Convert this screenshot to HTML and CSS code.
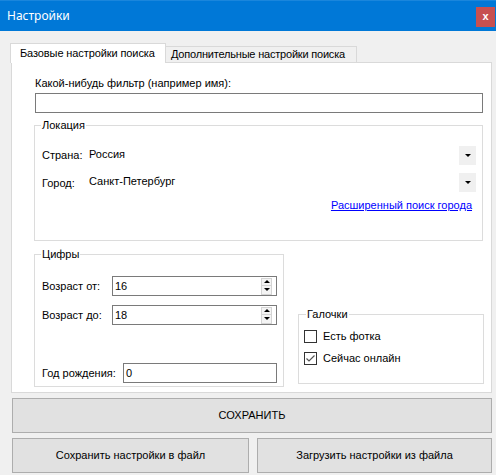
FILE: index.html
```html
<!DOCTYPE html>
<html lang="ru">
<head>
<meta charset="utf-8">
<title>Настройки</title>
<link rel="stylesheet" href="styles.css">
</head>
<body>
<div class="window">
  <div class="titlebar">
    <span class="title">Настройки</span>
    <span class="close">x</span>
  </div>
  <div class="client">
    <div class="tabs">
      <div class="tab active">Базовые настройки поиска</div>
      <div class="tab">Дополнительные настройки поиска</div>
      <div class="tab-fill"></div>
    </div>
    <div class="panel">
      <div class="label">Какой-нибудь фильтр (например имя):</div>
      <div class="textbox wide"></div>

      <fieldset class="group loc">
        <legend>Локация</legend>
        <div class="combo-row first">
          <span class="combo-label">Страна:</span>
          <div class="combo"><span class="combo-text">Россия</span><span class="combo-btn"><span class="tri"></span></span></div>
        </div>
        <div class="combo-row second">
          <span class="combo-label low">Город:</span>
          <div class="combo"><span class="combo-text">Санкт-Петербург</span><span class="combo-btn"><span class="tri"></span></span></div>
        </div>
        <div class="link-row"><a class="link" href="#">Расширенный поиск города</a></div>
      </fieldset>

      <div class="lower">
        <fieldset class="group nums">
          <legend>Цифры</legend>
          <div class="num-row r1">
            <span class="num-label">Возраст от:</span>
            <div class="textbox num"><span class="val">16</span><span class="spin"><span class="up"><span class="tri-up"></span></span><span class="down"><span class="tri"></span></span></span></div>
          </div>
          <div class="num-row r2">
            <span class="num-label">Возраст до:</span>
            <div class="textbox num"><span class="val">18</span><span class="spin"><span class="up"><span class="tri-up"></span></span><span class="down"><span class="tri"></span></span></span></div>
          </div>
          <div class="num-row r3">
            <span class="num-label year">Год рождения:</span>
            <div class="textbox num"><span class="val">0</span></div>
          </div>
        </fieldset>

        <fieldset class="group checks">
          <legend>Галочки</legend>
          <div class="check-row c1">
            <span class="box"></span><span class="check-text">Есть фотка</span>
          </div>
          <div class="check-row c2">
            <span class="box"><svg width="11" height="11" viewBox="0 0 11 11"><polyline points="1.5,5.5 4,8 9.5,2.5" fill="none" stroke="#555" stroke-width="1.2"/></svg></span><span class="check-text">Сейчас онлайн</span>
          </div>
        </fieldset>
      </div>
    </div>

    <div class="btn save">СОХРАНИТЬ</div>
    <div class="btn-row">
      <div class="btn half left">Сохранить настройки в файл</div>
      <div class="btn half right">Загрузить настройки из файла</div>
    </div>
  </div>
</div>
</body>
</html>
```

FILE: styles.css
```css
html, body {
  margin: 0;
  padding: 0;
}
body {
  width: 496px;
  height: 475px;
  overflow: hidden;
  background: #f0f0f0;
  font-family: "Liberation Sans", Arial, sans-serif;
  font-size: 11px;
  line-height: 13px;
  color: #000;
}
.window {
  width: 496px;
  height: 475px;
  background: #f0f0f0;
}
.titlebar {
  height: 30px;
  background: #0078d7;
  border-top: 1px solid #1a86dc;
  display: flex;
  align-items: flex-start;
}
.title {
  font-family: "Noto Sans", "Liberation Sans", sans-serif;
  font-size: 12px;
  line-height: 16px;
  color: #fff;
  margin: 7px 0 0 7px;
}
.close {
  margin: 6px 1px 0 auto;
  width: 19px;
  height: 20px;
  background: #c75050;
  color: #fff;
  font-family: "Liberation Sans", sans-serif;
  font-weight: bold;
  font-size: 11px;
  line-height: 19px;
  text-align: center;
}
.client {
  padding-top: 12px;
}
.tabs {
  display: flex;
  align-items: flex-end;
  margin-left: 10px;
  width: 482px;
  height: 20px;
}
.tab {
  box-sizing: border-box;
  height: 17px;
  padding: 0 4px;
  line-height: 15px;
  background: #f0f0f0;
  border: 1px solid #d9d9d9;
  border-left: none;
  white-space: nowrap;
  overflow: hidden;
}
.tab.active {
  height: 20px;
  width: 156px;
  background: #fff;
  border-left: 1px solid #d9d9d9;
  border-bottom: none;
  padding-left: 9px;
  line-height: 18px;
  letter-spacing: -0.1px;
}
.tab:not(.active) {
  width: 191px;
  padding-left: 5px;
  letter-spacing: -0.2px;
}
.tab-fill {
  flex: 1;
  height: 0;
  border-bottom: 1px solid #d9d9d9;
}
.panel {
  box-sizing: border-box;
  margin-left: 11px;
  width: 481px;
  height: 330px;
  background: #fff;
  border: 1px solid #d9d9d9;
  border-top: none;
  padding: 14px 0 0 23px;
}
.label {
  height: 13px;
}
.textbox {
  box-sizing: border-box;
  height: 20px;
  background: #fff;
  border: 1px solid #7a7a7a;
}
.textbox.wide {
  margin-top: 3px;
  width: 448px;
}
.group {
  margin: 0;
  padding: 0;
  border: 1px solid #dcdcdc;
  min-width: 0;
}
.group legend {
  padding: 0 1px;
  margin-left: -1px;
  line-height: 13px;
}
.loc {
  margin: 6px 0 0 -1px;
  width: 449px;
  height: 122px;
  box-sizing: border-box;
  padding: 0 6px 0 7px;
}
.combo-row {
  display: flex;
  align-items: center;
  height: 19px;
}
.combo-row.first {
  margin-top: 14px;
}
.combo-row.second {
  margin-top: 8px;
}
.combo-label {
  width: 44px;
}
.combo-label.low {
  position: relative;
  top: 1px;
}
.combo {
  flex: 1;
  display: flex;
  align-items: center;
  height: 19px;
  background: #fff;
}
.combo-text {
  flex: 1;
  padding-left: 3px;
  position: relative;
  top: -1px;
}
.combo-btn {
  width: 17px;
  height: 19px;
  background: #f0f0f0;
  display: flex;
  align-items: center;
  justify-content: center;
}
.tri {
  width: 0;
  height: 0;
  border-left: 3px solid transparent;
  border-right: 3px solid transparent;
  border-top: 3px solid #000;
}
.tri-up {
  width: 0;
  height: 0;
  border-left: 3px solid transparent;
  border-right: 3px solid transparent;
  border-bottom: 3px solid #000;
}
.link-row {
  margin-top: 7px;
  text-align: right;
  padding-right: 4px;
}
.link {
  color: #0000ff;
  text-decoration: underline;
}
.lower {
  display: flex;
  align-items: flex-start;
  margin: 7px 0 0 -1px;
}
.nums {
  box-sizing: border-box;
  width: 250px;
  height: 139px;
  padding: 0 6px 0 7px;
}
.num-row {
  display: flex;
  align-items: center;
}
.num-row.r1 { margin-top: 15px; }
.num-row.r2 { margin-top: 9px; }
.num-row.r3 { margin-top: 38px; }
.num-label {
  width: 70px;
}
.num-label.year {
  width: 81px;
}
.textbox.num {
  flex: 1;
  display: flex;
  align-items: center;
  justify-content: space-between;
}
.val {
  padding-left: 2px;
}
.spin {
  display: flex;
  flex-direction: column;
  width: 11px;
  margin-right: 4px;
}
.spin .up, .spin .down {
  box-sizing: border-box;
  height: 8px;
  border: 1px solid #d4d4d4;
  background: #f4f4f4;
  display: flex;
  align-items: center;
  justify-content: center;
}
.spin .down {
  border-top: none;
  height: 9px;
}
.checks {
  box-sizing: border-box;
  margin-top: 60px;
  margin-left: 14px;
  width: 186px;
  height: 76px;
  padding: 0 5px;
}
.checks legend {
  margin-left: 2px;
}
.check-row {
  display: flex;
  align-items: center;
  height: 13px;
}
.check-row.c1 { margin-top: 9px; }
.check-row.c2 { margin-top: 9px; }
.box {
  box-sizing: border-box;
  width: 13px;
  height: 13px;
  border: 1px solid #333;
  background: #fff;
  display: flex;
  align-items: center;
  justify-content: center;
}
.check-text {
  margin-left: 6px;
}
.btn {
  box-sizing: border-box;
  background: #e1e1e1;
  border: 1px solid #adadad;
  display: flex;
  align-items: center;
  justify-content: center;
  height: 35px;
}
.btn.save {
  margin: 5px 0 0 12px;
  width: 480px;
}
.btn-row {
  display: flex;
  margin: 5px 0 0 12px;
  width: 480px;
  gap: 8px;
}
.btn.half.left {
  width: 237px;
}
.btn.half.right {
  width: 235px;
}
```
